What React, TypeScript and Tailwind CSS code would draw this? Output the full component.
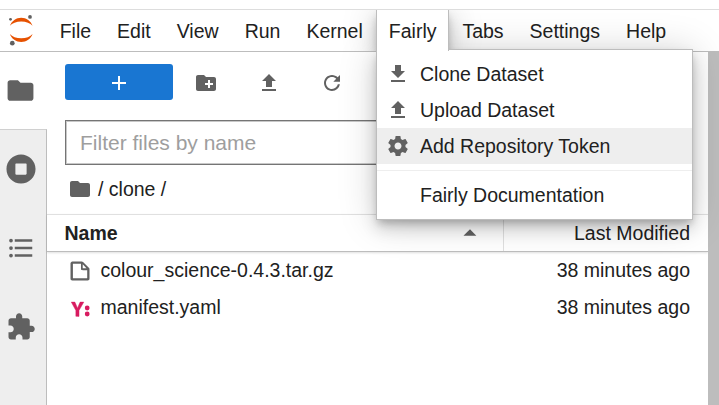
import type { ReactNode } from "react";

type IconProps = { d: string; size: number; box?: number; className?: string };

function Icon({ d, size, box = 24, className = "text-[#616161]" }: IconProps) {
  return (
    <svg width={size} height={size} viewBox={`0 0 ${box} ${box}`} fill="currentColor" className={`shrink-0 ${className}`}>
      <path d={d} />
    </svg>
  );
}

const icons = {
  folder: "M10 4H4c-1.1 0-1.99.9-1.99 2L2 18c0 1.1.9 2 2 2h16c1.1 0 2-.9 2-2V8c0-1.1-.9-2-2-2h-8l-2-2z",
  newFolder:
    "M20 6h-8l-2-2H4c-1.11 0-1.99.89-1.99 2L2 18c0 1.11.89 2 2 2h16c1.11 0 2-.89 2-2V8c0-1.11-.89-2-2-2zm-1 8h-3v3h-2v-3h-3v-2h3V9h2v3h3v2z",
  add: "M19 13h-6v6h-2v-6H5v-2h6V5h2v6h6v2z",
  upload: "M9 16h6v-6h4l-7-7-7 7h4zm-4 2h14v2H5z",
  download: "M19 9h-4V3H9v6H5l7 7 7-7zM5 18v2h14v-2H5z",
  refresh:
    "M9 13.5c-2.49 0-4.5-2.01-4.5-4.5S6.51 4.5 9 4.5c1.24 0 2.36.52 3.17 1.33L10 8h5V3l-1.76 1.76C12.15 3.68 10.66 3 9 3 5.69 3 3.01 5.69 3.01 9S5.69 15 9 15c2.97 0 5.43-2.16 5.9-5h-1.52c-.46 2-2.24 3.5-4.38 3.5z",
  settings:
    "M19.43 12.98c.04-.32.07-.64.07-.98s-.03-.66-.07-.98l2.11-1.65c.19-.15.24-.42.12-.64l-2-3.46c-.12-.22-.39-.3-.61-.22l-2.49 1c-.52-.4-1.08-.73-1.69-.98l-.38-2.65C14.46 2.18 14.25 2 14 2h-4c-.25 0-.46.18-.49.42l-.38 2.65c-.61.25-1.17.59-1.69.98l-2.49-1c-.23-.09-.49 0-.61.22l-2 3.46c-.13.22-.07.49.12.64l2.11 1.65c-.04.32-.07.65-.07.98s.03.66.07.98l-2.11 1.65c-.19.15-.24.42-.12.64l2 3.46c.12.22.39.3.61.22l2.49-1c.52.4 1.08.73 1.69.98l.38 2.65c.03.24.24.42.49.42h4c.25 0 .46-.18.49-.42l.38-2.65c.61-.25 1.17-.59 1.69-.98l2.49 1c.23.09.49 0 .61-.22l2-3.46c.12-.22.07-.49-.12-.64l-2.11-1.65zM12 15.5c-1.93 0-3.5-1.57-3.5-3.5s1.57-3.5 3.5-3.5 3.5 1.57 3.5 3.5-1.57 3.5-3.5 3.5z",
  running:
    "M256 8C119 8 8 119 8 256s111 248 248 248 248-111 248-248S393 8 256 8zm96 328c0 8.8-7.2 16-16 16H176c-8.8 0-16-7.2-16-16V176c0-8.8 7.2-16 16-16h160c8.8 0 16 7.2 16 16v160z",
  toc: "M7,5H21V7H7V5M7,13V11H21V13H7M4,4.5A1.5,1.5 0 0,1 5.5,6A1.5,1.5 0 0,1 4,7.5A1.5,1.5 0 0,1 2.5,6A1.5,1.5 0 0,1 4,4.5M4,10.5A1.5,1.5 0 0,1 5.5,12A1.5,1.5 0 0,1 4,13.5A1.5,1.5 0 0,1 2.5,12A1.5,1.5 0 0,1 4,10.5M7,19V17H21V19H7M4,16.5A1.5,1.5 0 0,1 5.5,18A1.5,1.5 0 0,1 4,19.5A1.5,1.5 0 0,1 2.5,18A1.5,1.5 0 0,1 4,16.5Z",
  extension:
    "M20.5 11H19V7c0-1.1-.9-2-2-2h-4V3.5C13 2.12 11.88 1 10.5 1S8 2.12 8 3.5V5H4c-1.1 0-1.99.9-1.99 2v3.8H3.5c1.49 0 2.7 1.21 2.7 2.7s-1.21 2.7-2.7 2.7H2V20c0 1.1.9 2 2 2h3.8v-1.5c0-1.49 1.21-2.7 2.7-2.7 1.49 0 2.7 1.21 2.7 2.7V22H17c1.1 0 2-.9 2-2v-4h1.5c1.38 0 2.5-1.12 2.5-2.5S21.88 11 20.5 11z",
  file: "M19.3 8.2l-5.5-5.5c-.3-.3-.7-.5-1.2-.5H3.9c-.8.1-1.6.9-1.6 1.8v14.1c0 .9.7 1.6 1.6 1.6h14.2c.9 0 1.6-.7 1.6-1.6V9.4c.1-.5-.1-.9-.4-1.2zm-5.8-3.3l3.4 3.6h-3.4V4.9zm3.9 12.7H4.7c-.1 0-.2 0-.2-.2V4.7c0-.2.1-.3.2-.3h7.2v4.4s0 .8.3 1.1c.3.3 1.1.3 1.1.3h4.3v7.2s-.1.2-.2.2z",
  caretUp: "M5.2,10.5L9,6.8l3.8,3.8H5.2z",
};

function JupyterLogo() {
  return (
    <svg width="46" height="41" viewBox="0 0 46 41" className="shrink-0">
      <g fill="#e65100">
        <path
          transform="translate(9.9 7.7) scale(0.62)"
          d="M18.2733 5.93931C26.1235 5.93931 32.9793 8.81583 36.538 13.0734C35.2126 9.25303 32.7424 5.94262 29.4694 3.6004C26.1963 1.25818 22.2823 0 18.269 0C14.2557 0 10.3417 1.25818 7.0686 3.6004C3.79556 5.94262 1.32539 9.25303 0 13.0734C3.56745 8.82463 10.4232 5.93931 18.2733 5.93931Z"
        />
        <path
          transform="translate(9.9 23.9) scale(0.62)"
          d="M18.2646 7.13411C10.4145 7.13411 3.55872 4.2576 0 0C1.32539 3.8204 3.79556 7.13081 7.0686 9.47303C10.3417 11.8152 14.2557 13.0734 18.269 13.0734C22.2823 13.0734 26.1963 11.8152 29.4694 9.47303C32.7424 7.13081 35.2126 3.8204 36.538 0C32.9705 4.2576 26.1148 7.13411 18.2646 7.13411Z"
        />
      </g>
      <g fill="#616161">
        <circle cx="30" cy="6.9" r="1.9" />
        <circle cx="10.5" cy="9.3" r="1.4" />
        <circle cx="12.3" cy="33.2" r="2.35" />
      </g>
    </svg>
  );
}

function YamlIcon() {
  return (
    <svg width="24" height="24" viewBox="0 0 22 22" fill="#d81b60" className="shrink-0">
      <path
        stroke="#d81b60"
        strokeWidth="0.4"
        d="M7.2 18.6v-5.4L3 5.6h3.3l1.4 3.1c.3.9.6 1.6 1 2.5.3-.8.6-1.6 1-2.5l1.4-3.1h3.4l-4.4 7.6v5.5l-2.9-.1z"
      />
      <circle cx="17.6" cy="16.5" r="2.2" />
      <circle cx="17.6" cy="11" r="2.2" />
    </svg>
  );
}

function MenuRow({ icon, label, active = false }: { icon?: string; label: string; active?: boolean }) {
  return (
    <div className={`flex h-9 items-center pl-[9px] ${active ? "bg-[#eeeeee]" : ""}`}>
      <span className="flex w-[34.2px]">{icon && <Icon d={icon} size={24} />}</span>
      <span className="pt-[2px]">{label}</span>
    </div>
  );
}

const elevation =
  "shadow-[0_4.5px_7.5px_-1.5px_rgba(0,0,0,0.2),0_9px_15px_0_rgba(0,0,0,0.14),0_1.5px_36px_0_rgba(0,0,0,0.18)]";

function FairlyMenu() {
  return (
    <div className={`absolute top-[39px] left-0 z-10 h-[171px] w-[317px] border border-[#bdbdbd] bg-white pt-[6px] whitespace-nowrap ${elevation}`}>
      <MenuRow icon={icons.download} label="Clone Dataset" />
      <MenuRow icon={icons.upload} label="Upload Dataset" />
      <MenuRow icon={icons.settings} label="Add Repository Token" active />
      <div className="my-[6px] h-px bg-[#eeeeee]" />
      <MenuRow label="Fairly Documentation" />
    </div>
  );
}

function MenuItem({ children }: { children: ReactNode }) {
  return <div className="flex items-center border-x border-transparent px-3 pt-[2px]">{children}</div>;
}

function MenuBar() {
  return (
    <header className="flex h-[42px] shrink-0 border-b border-[#bdbdbd]">
      <JupyterLogo />
      <div className="ml-[0.7px] flex">
        <MenuItem>File</MenuItem>
        <MenuItem>Edit</MenuItem>
        <MenuItem>View</MenuItem>
        <MenuItem>Run</MenuItem>
        <MenuItem>Kernel</MenuItem>
      </div>
      <div className="relative w-[73.6px]">
        <div className={`absolute inset-0 [clip-path:inset(0_-45px_0_-45px)] ${elevation}`} />
        <FairlyMenu />
        <div className="relative z-20 flex h-[41px] w-[73px] items-center border-x border-[#bdbdbd] bg-white pt-[2px] pl-[12px]">
          Fairly
        </div>
      </div>
      <MenuItem>Tabs</MenuItem>
      <MenuItem>Settings</MenuItem>
      <MenuItem>Help</MenuItem>
    </header>
  );
}

function SideBar() {
  return (
    <nav className="flex w-[47px] shrink-0 flex-col bg-[#eeeeee]">
      <div className="flex h-[77px] items-center bg-white pb-px pl-[5px]">
        <Icon d={icons.folder} size={31} />
      </div>
      <div className="flex flex-1 flex-col border-t border-r border-t-[#d0d0d0] border-r-[#bdbdbd]">
        <div className="flex h-[79px] items-center pb-px pl-[6px]">
          <Icon d={icons.running} size={30} box={512} />
        </div>
        <div className="flex h-[79px] items-center pb-px pl-[6px]">
          <Icon d={icons.toc} size={30} />
        </div>
        <div className="flex h-[79px] items-center pb-px pl-[5.5px]">
          <Icon d={icons.extension} size={30} />
        </div>
      </div>
    </nav>
  );
}

function FileRow({ icon, name }: { icon: ReactNode; name: string }) {
  return (
    <div className="flex h-[37px] items-center pr-[18px] pl-[21px]">
      {icon}
      <span className="ml-[8.5px] flex-1">{name}</span>
      <span>38 minutes ago</span>
    </div>
  );
}

function FileBrowser() {
  return (
    <main className="flex min-w-0 flex-1 flex-col">
      <div className="flex h-[62px] items-center pl-[18px]">
        <button className="mb-[2px] flex h-9 w-[108px] items-center justify-center rounded-[3px] bg-[#1976d2] pt-[2px]">
          <Icon d={icons.add} size={24} className="text-white" />
        </button>
        <div className="ml-[1.5px] flex">
          <span className="flex w-[63px] justify-center">
            <Icon d={icons.newFolder} size={24} />
          </span>
          <span className="flex w-[63px] justify-center">
            <Icon d={icons.upload} size={24} />
          </span>
          <span className="flex w-[63px] justify-center">
            <Icon d={icons.refresh} size={24} box={18} />
          </span>
        </div>
      </div>
      <div className="mx-[18px] mt-[6px] flex h-[45px] items-center border border-[#757575] px-[14px] text-[21px] text-[#9e9e9e] shadow-[inset_0_0_0_1px_#c8c8c8]">
        Filter files by name
      </div>
      <div className="flex h-[49px] items-center pl-[21px]">
        <Icon d={icons.folder} size={24} className="mb-px text-[#616161]" />
        <span className="ml-[6px]">/ clone /</span>
      </div>
      <div className="flex h-[38px] border-t border-b border-t-[#e0e0e0] border-b-[#bdbdbd] shadow-[0_1px_2px_rgba(0,0,0,0.12)]">
        <div className="flex flex-1 items-center justify-between pr-[18px] pl-[17.5px]">
          <span className="pt-[2px] font-bold">Name</span>
          <Icon d={icons.caretUp} size={30} box={18} />
        </div>
        <div className="flex w-[205px] items-center justify-end border-l border-[#e0e0e0] pt-[2px] pr-[18px]">
          Last Modified
        </div>
      </div>
      <FileRow icon={<Icon d={icons.file} size={24} box={22} />} name="colour_science-0.4.3.tar.gz" />
      <FileRow icon={<YamlIcon />} name="manifest.yaml" />
    </main>
  );
}

export default function App() {
  return (
    <div className="flex h-[405px] w-[719px] flex-col overflow-hidden bg-white pt-[9px] font-['Liberation_Sans',Arial,sans-serif] text-[19.5px] leading-none text-[#212121]">
      <div className="flex min-h-0 flex-1 flex-col border-t border-[#dddddd]">
        <MenuBar />
        <div className="flex min-h-0 flex-1">
          <SideBar />
          <FileBrowser />
          <div className="w-[11px] shrink-0 bg-[#bdbdbd]" />
        </div>
      </div>
    </div>
  );
}
